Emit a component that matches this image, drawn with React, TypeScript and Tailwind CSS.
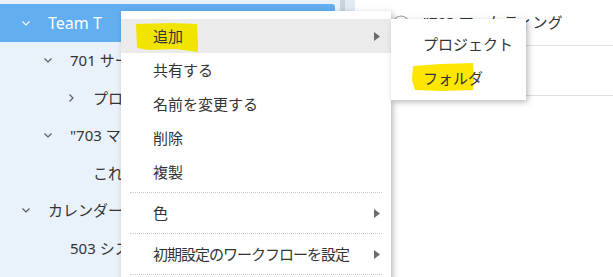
const font = "font-['Noto_Sans','Noto_Sans_CJK_JP',sans-serif]";

function Chevron({ dir, color }: { dir: "down" | "right"; color: string }) {
  return (
    <svg width="10" height="10" viewBox="0 0 10 10" className="shrink-0">
      {dir === "down" ? (
        <polyline points="1.5,3.5 5,7 8.5,3.5" fill="none" stroke={color} strokeWidth="1.1" />
      ) : (
        <polyline points="3.5,1.5 7,5 3.5,8.5" fill="none" stroke={color} strokeWidth="1.1" />
      )}
    </svg>
  );
}

type Node = { label: string; level: number; chevron?: "down" | "right"; active?: boolean };

const tree: Node[] = [
  { label: "Team T", level: 0, chevron: "down", active: true },
  { label: "701 サービス開発", level: 1, chevron: "down" },
  { label: "プロジェクト一覧", level: 2, chevron: "right" },
  { label: "\"703 マーケティング", level: 1, chevron: "down" },
  { label: "これはテスト", level: 2 },
  { label: "カレンダー", level: 0, chevron: "down" },
  { label: "503 システム", level: 1 },
];

function TreeRow({ node }: { node: Node }) {
  const pad = node.level === 0 ? "pl-[16px]" : node.level === 1 ? "pl-[38px]" : "pl-[61px]";
  return (
    <div
      className={`h-[37.5px] flex items-center ${pad} ${
        node.active ? "bg-[#63aef0] text-white text-[16px] rounded-tr-[3px] w-[335px]" : "text-[#333] text-[15px]"
      }`}
    >
      <div className="w-[20px] flex justify-center">
        {node.chevron && <Chevron dir={node.chevron} color={node.active ? "#ffffff" : "#555"} />}
      </div>
      <span className="ml-[12px] whitespace-nowrap">{node.label}</span>
    </div>
  );
}

function Arrow() {
  return (
    <svg width="6" height="9" viewBox="0 0 6 9" className="shrink-0">
      <polygon points="0,0 6,4.5 0,9" fill="#6b6b6b" />
    </svg>
  );
}

function MenuItem({
  label,
  arrow,
  active,
  marker,
  tight,
}: {
  label: string;
  arrow?: boolean;
  active?: boolean;
  marker?: boolean;
  tight?: boolean;
}) {
  return (
    <div className={`relative h-[34px] shrink-0 flex items-center justify-between pl-[32px] pr-[11px] ${active ? "bg-[#ebebeb]" : ""}`}>
      {marker && (
        <svg className="absolute left-[14px] top-[3px]" width="66" height="32" viewBox="0 0 66 32">
          <path d="M1 2 L36 1 L62 2 L63 20 L63 30 L40 27 L14 28 L2 26 Z" fill="#f1e500" />
        </svg>
      )}
      <span className={`relative whitespace-nowrap text-[15px] text-[#333] ${tight ? "tracking-[-1px]" : ""}`}>{label}</span>
      {arrow && <Arrow />}
    </div>
  );
}

function Separator() {
  return <div className="shrink-0 mx-[9px] my-[3px] border-t border-dotted border-[#c9c9c9]" />;
}

export default function App() {
  return (
    <div className={`relative w-[613px] h-[277px] overflow-hidden flex bg-white ${font}`}>
      {/* sidebar */}
      <div className="relative w-[340px] shrink-0 bg-[#e9f2fa] pt-[4px]">
        {tree.map((n) => (
          <TreeRow key={n.label} node={n} />
        ))}
        <div className="ml-[36px] mt-[10px] w-[150px] border-t border-[#b7bec6]" />
      </div>
      {/* scrollbar */}
      <div className="w-[15px] shrink-0 flex bg-[#e2eaf2]">
        <div className="w-[5px] h-[60px] bg-[#c7d3df]" />
      </div>
      {/* right panel */}
      <div className="flex-1 flex flex-col">
        <div className="h-[46px] flex items-center pl-[37px] border-b border-[#e2e2e2]">
          <svg width="18" height="18" viewBox="0 0 18 18" className="mt-[2px]">
            <circle cx="9" cy="9" r="8" fill="none" stroke="#9a9a9a" strokeWidth="1.2" />
          </svg>
          <span className="ml-[13px] text-[15px] text-[#333] whitespace-nowrap">"703 マーケティング</span>
        </div>
        <div className="h-[50px] border-b border-[#e2e2e2]" />
      </div>

      {/* context menu */}
      <div className="absolute left-[121px] top-[11px] w-[270px] h-[290px] bg-white shadow-[2px_2px_6px_rgba(0,0,0,0.28)] flex flex-col pt-[8px]">
        <MenuItem label="追加" arrow active marker />
        <MenuItem label="共有する" />
        <MenuItem label="名前を変更する" />
        <MenuItem label="削除" />
        <MenuItem label="複製" />
        <Separator />
        <MenuItem label="色" arrow />
        <Separator />
        <MenuItem label="初期設定のワークフローを設定" arrow tight />
        <Separator />
      </div>

      {/* submenu */}
      <div className="absolute left-[391px] top-[19px] w-[135px] h-[81px] bg-white shadow-[2px_2px_6px_rgba(0,0,0,0.28)] flex flex-col pt-[8px]">
        <div className="h-[34px] flex items-center pl-[32px] text-[15px] text-[#333] whitespace-nowrap">プロジェクト</div>
        <div className="relative h-[34px] flex items-center pl-[32px] text-[15px] text-[#333] whitespace-nowrap">
          <svg className="absolute left-[20px] top-[1px]" width="64" height="30" viewBox="0 0 64 30">
            <path d="M2 4 L30 2 L62 1 L63 16 L62 28 L30 29 L4 28 L1 18 Z" fill="#ffe600" />
          </svg>
          <span className="relative">フォルダ</span>
        </div>
      </div>
    </div>
  );
}
